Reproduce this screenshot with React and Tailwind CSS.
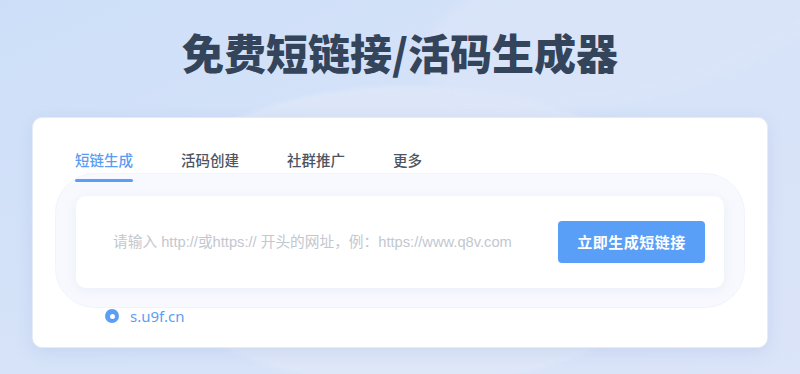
import React from 'react';

const tabs = ['短链生成', '活码创建', '社群推广', '更多'];

export default function App() {
  return (
    <div
      className="relative w-[800px] h-[374px] overflow-hidden bg-gradient-to-br from-[#cddff8] via-[#d6e3f8] to-[#dbe4f8]"
      style={{ fontFamily: '"Noto Sans CJK SC", "Noto Sans", sans-serif' }}
    >
      {/* soft background shapes */}
      <div className="absolute left-[130px] top-[86px] w-[560px] h-[300px] rounded-[50%] bg-[#e1e9f9] opacity-70 blur-[2px]" />
      <div className="absolute left-[420px] -top-[60px] w-[420px] h-[160px] rotate-[-12deg] rounded-[50%] bg-[#dde6f9] opacity-60 blur-[6px]" />

      <div className="relative flex flex-col items-center">
        <h1 className="mt-[24px] h-[56px] text-[42px] leading-[56px] font-black text-[#34445a]">
          免费短链接/活码生成器
        </h1>

        <div className="mt-[37px] w-[736px] h-[231px] rounded-[10px] bg-white border border-[#e6ecf7] shadow-[0_4px_16px_rgba(120,150,210,0.18)] px-[42px] pt-[31px]">
          {/* tabs */}
          <div className="flex gap-[48px]">
            {tabs.map((t, i) => (
              <div key={t} className="flex flex-col">
                <span
                  className={
                    i === 0
                      ? 'text-[14.5px] leading-[22px] font-medium text-[#5b9cf3]'
                      : 'text-[14.5px] leading-[22px] font-medium text-[#4e5562]'
                  }
                >
                  {t}
                </span>
                <div className={i === 0 ? 'mt-[8px] h-[3px] rounded-full bg-[#5b9ef6]' : 'mt-[8px] h-[3px]'} />
              </div>
            ))}
          </div>

          {/* input area with soft glow */}
          <div className="-mx-[20px] mt-[-9px] rounded-[40px] bg-[#f8f9fe] border border-[#f1f4fb] px-[20px] pt-[22px] pb-[19px]">
            <div className="flex items-center h-[92px] rounded-[10px] bg-white shadow-[0_2px_12px_rgba(140,160,210,0.12)] pl-[37px] pr-[19px]">
              <input
                className="flex-1 outline-none bg-transparent text-[14.7px] text-[#333] placeholder:text-[#c3c7cf]"
                style={{ fontFamily: '"Liberation Sans", "Noto Sans CJK SC", sans-serif' }}
                placeholder="请输入 http://或https:// 开头的网址，例：https://www.q8v.com"
              />
              <button className="w-[147px] h-[42px] rounded-[4px] bg-[#5a9ff7] text-white text-[15px] font-semibold tracking-[0.5px]">
                立即生成短链接
              </button>
            </div>
          </div>

          {/* domain radio */}
          <div className="mt-[-2px] ml-[30px] flex items-center gap-[11px]">
            <span className="w-[14px] h-[14px] rounded-full bg-[#5b9ef6] flex items-center justify-center">
              <span className="w-[5px] h-[5px] rounded-full bg-white" />
            </span>
            <span className="text-[15px] leading-[20px] text-[#5b9ef6]" style={{ fontFamily: '"Noto Sans", sans-serif' }}>
              s.u9f.cn
            </span>
          </div>
        </div>
      </div>
    </div>
  );
}
